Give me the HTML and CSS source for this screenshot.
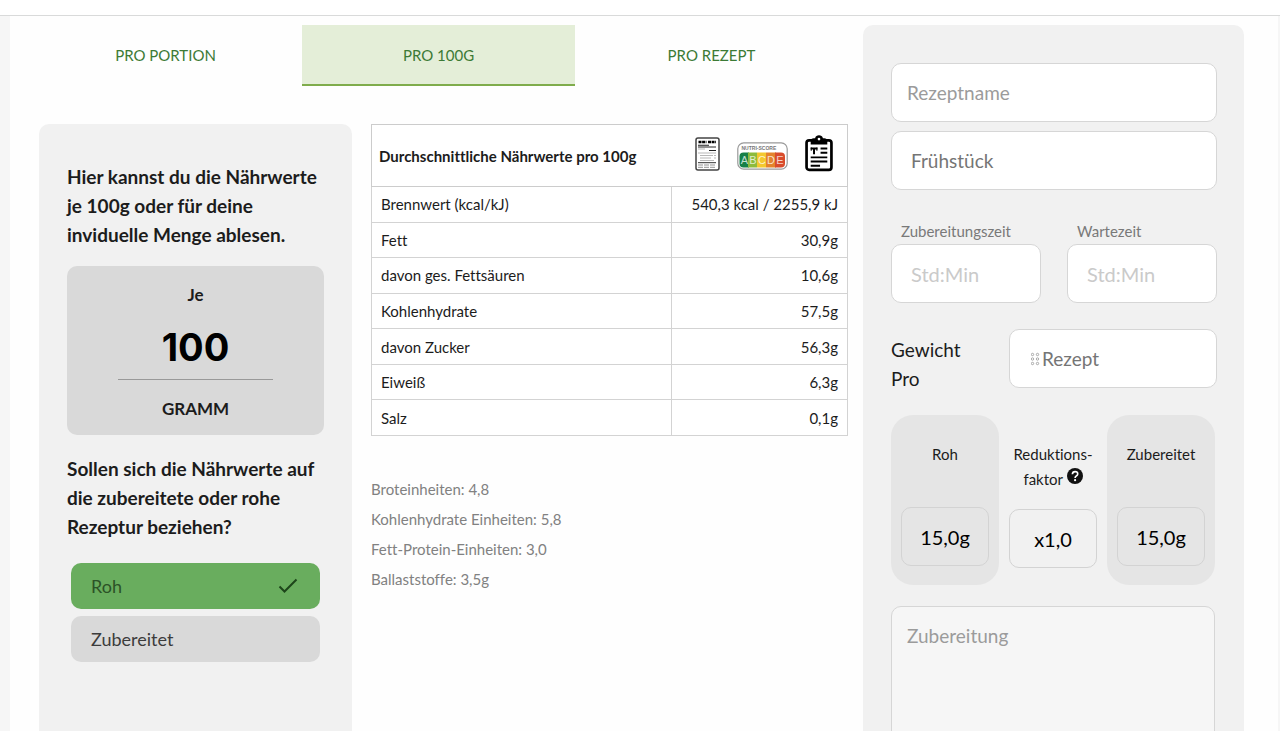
FILE: index.html
```html
<!DOCTYPE html>
<html lang="de">
<head>
<meta charset="utf-8">
<title>Nährwerte</title>
<link rel="stylesheet" href="styles.css">
</head>
<body>
<div class="page">
  <header class="topbar"></header>
  <main class="content">
    <section class="nutrition">
      <nav class="tabs">
        <button class="tab" type="button">PRO PORTION</button>
        <button class="tab tab-active" type="button">PRO 100G</button>
        <button class="tab" type="button">PRO REZEPT</button>
      </nav>
      <div class="columns">
        <aside class="card">
          <label class="heading" for="amount">Hier kannst du die Nährwerte je 100g oder für deine inviduelle Menge ablesen.</label>
          <div class="amount">
            <span>Je</span>
            <input id="amount" class="amount-input" type="text" value="100">
            <span>GRAMM</span>
          </div>
          <fieldset class="choices">
            <legend class="heading">Sollen sich die Nährwerte auf die zubereitete oder rohe Rezeptur beziehen?</legend>
            <label class="choice"><input class="choice-input" type="radio" name="state" checked><span>Roh</span>
              <svg class="check" viewBox="0 0 20 16" aria-hidden="true"><path d="M1.500 8.500 6.500 13.500 18.500 1.500" fill="none" stroke="currentColor" stroke-width="2"/></svg></label>
            <label class="choice"><input class="choice-input" type="radio" name="state"><span>Zubereitet</span></label>
          </fieldset>
        </aside>
        <div class="values">
          <table class="table">
            <colgroup><col class="col-name"><col></colgroup>
            <thead>
              <tr><th colspan="2"><div class="table-head">
                <span>Durchschnittliche Nährwerte pro 100g</span>
                <span class="icons">
                  <svg width="25" height="34" viewBox="0 0 25 34" aria-hidden="true">
                    <rect x="1" y="1" width="23" height="32" rx="2" fill="#fff" stroke="#444" stroke-width="1.500"/>
                    <path d="M3.500 5h8M13 5h8" stroke="#000" stroke-width="2.400" stroke-dasharray="3 .6"/>
                    <path d="M3 8.200h11M3 10h18M14 13.500h7" stroke="#222" stroke-width="1.100"/>
                    <path d="M3 12h7M3 16h18M5 18.500h13M5 21h11M5 23.500h14M19 18.500h2M19 21h2" stroke="#999" stroke-width=".7"/>
                    <path d="M3 25.700h18" stroke="#333" stroke-width="1"/>
                    <path d="M3 28h18M3 30.300h18" stroke="#777" stroke-width=".8" stroke-dasharray="5 1"/>
                  </svg>
                  <svg class="score" width="51" height="28" viewBox="0 0 51 28" aria-hidden="true">
                    <defs><clipPath id="scale"><rect x="2.500" y="10.500" width="45.500" height="15" rx="4"/></clipPath></defs>
                    <rect x=".8" y=".8" width="49.400" height="26.400" rx="6" fill="#fff" stroke="#999" stroke-width="1.200"/>
                    <text x="4.500" y="7.600" class="score-title">NUTRI-SCORE</text>
                    <g clip-path="url(#scale)">
                      <path fill="#178048" d="M2 10h10v17H2z"/><path fill="#8dbb3c" d="M11 10h9v17h-9z"/><path fill="#f4c82f" d="M20 10h9v17h-9z"/><path fill="#e4832c" d="M29 10h10v17H29z"/><path fill="#d84b2c" d="M38 10h11v17H38z"/>
                    </g>
                    <g class="score-letter"><text x="7.500" y="22">A</text><text x="16" y="22">B</text><text x="25" y="22">C</text><text x="34" y="22">D</text><text x="43" y="22">E</text></g>
                  </svg>
                  <svg width="28" height="37" viewBox="0.5 1.5 27 34.5" aria-hidden="true">
                    <rect x="2" y="6" width="24" height="28.500" rx="2.500" fill="#fff" stroke="#000" stroke-width="2.600"/>
                    <path d="M6 10V6.500Q6 4 9 4h1.200a4 4 0 0 1 7.600 0H19q3 0 3 2.500V10z" fill="#000"/>
                    <circle cx="14" cy="4.800" r="1.300" fill="#fff"/>
                    <path d="M6 14h6.500M9.200 13v6.500M15.500 14h6.500M15.500 18h6.500M6 22.500h16M6 26.500h16M6 30.500h9" stroke="#000" stroke-width="1.900"/>
                    <path d="M6.500 13v3M12 13v3" stroke="#000" stroke-width="1"/>
                  </svg>
                </span>
              </div></th></tr>
            </thead>
            <tbody>
              <tr><td>Brennwert (kcal/kJ)</td><td>540,3 kcal / 2255,9 kJ</td></tr>
              <tr><td>Fett</td><td>30,9g</td></tr>
              <tr><td>davon ges. Fettsäuren</td><td>10,6g</td></tr>
              <tr><td>Kohlenhydrate</td><td>57,5g</td></tr>
              <tr><td>davon Zucker</td><td>56,3g</td></tr>
              <tr><td>Eiweiß</td><td>6,3g</td></tr>
              <tr><td>Salz</td><td>0,1g</td></tr>
            </tbody>
          </table>
          <ul class="units">
            <li>Broteinheiten: 4,8</li>
            <li>Kohlenhydrate Einheiten: 5,8</li>
            <li>Fett-Protein-Einheiten: 3,0</li>
            <li>Ballaststoffe: 3,5g</li>
          </ul>
        </div>
      </div>
    </section>
    <form class="recipe">
      <input class="field field-name" type="text" placeholder="Rezeptname" aria-label="Rezeptname">
      <select class="field" aria-label="Kategorie"><option>Frühstück</option></select>
      <div class="times">
        <div class="time"><label class="time-label" for="prep">Zubereitungszeit</label><input id="prep" class="field field-time" type="text" placeholder="Std:Min"></div>
        <div class="time"><label class="time-label" for="wait">Wartezeit</label><input id="wait" class="field field-time" type="text" placeholder="Std:Min"></div>
      </div>
      <div class="weight">
        <label class="weight-label" for="per">Gewicht Pro</label>
        <div class="field per">
          <svg width="9" height="14" viewBox="0 0 9 14" aria-hidden="true"><g fill="none" stroke="#8a8a8a" stroke-width=".7"><circle cx="1.500" cy="2.500" r="1.200"/><circle cx="6.500" cy="2.500" r="1.200"/><circle cx="1.500" cy="7" r="1.200"/><circle cx="6.500" cy="7" r="1.200"/><circle cx="1.500" cy="11.500" r="1.200"/><circle cx="6.500" cy="11.500" r="1.200"/></g></svg>
          <select id="per" class="per-select"><option>Rezept</option></select>
        </div>
      </div>
      <div class="factors">
        <div class="factor factor-shaded"><label class="factor-label" for="raw">Roh</label><input id="raw" class="field factor-input" type="text" value="15,0g"></div>
        <div class="factor"><label class="factor-label" for="factor">Reduktions-<br>faktor <svg class="help" viewBox="0 0 16 16" aria-hidden="true"><circle cx="8" cy="8" r="8" fill="#111"/><path d="M5.400 6.200Q5.500 3.600 8.100 3.600T10.700 5.900Q10.700 7.200 9.300 8 8.100 8.700 8.100 9.900" fill="none" stroke="#fff" stroke-width="1.700"/><circle cx="8.100" cy="12.200" r="1.100" fill="#fff"/></svg></label><input id="factor" class="field factor-input" type="text" value="x1,0"></div>
        <div class="factor factor-shaded"><label class="factor-label" for="cooked">Zubereitet</label><input id="cooked" class="field factor-input" type="text" value="15,0g"></div>
      </div>
      <textarea class="field notes" placeholder="Zubereitung" aria-label="Zubereitung"></textarea>
    </form>
  </main>
</div>
</body>
</html>
```
FILE: styles.css
```css
* { box-sizing: border-box; }
body { margin: 0; background: #f6f6f6; color: #1c1c1c; font-family: Lato, sans-serif; font-size: 15px; font-variant-ligatures: none; }
input, select, textarea, button { font: inherit; font-variant-ligatures: none; color: inherit; }
.page { display: flex; flex-direction: column; height: 100vh; overflow: hidden; }
.topbar { flex: none; height: 16px; background: #fff; border-bottom: 1px solid #d9dada; }
.content { flex: 1; min-height: 0; display: grid; grid-template-columns: minmax(0, 819fr) minmax(0, 381fr); gap: 15px; margin: 0 2px 0 10px; padding: 9px 34px 0 19px; background: #fefefe; }

.nutrition { display: flex; flex-direction: column; }
.tabs { display: grid; grid-template-columns: repeat(3, 1fr); }
.tab { height: 61px; padding: 0; border: 0; border-bottom: 2px solid transparent; background: none; color: #3c7a35; }
.tab-active { background: #e4eed8; border-bottom-color: #7fac4c; }
.columns { flex: 1; display: grid; grid-template-columns: minmax(0, 313fr) minmax(0, 477fr); gap: 19px; margin-top: 38px; padding-left: 10px; }

.card { padding: 38px 28px 0; border-radius: 10px 10px 0 0; background: #f1f1f1; }
.heading { display: block; padding: 0; font-size: 19px; font-weight: 700; line-height: 29px; }
.amount { display: flex; flex-direction: column; align-items: center; margin: 17px 0 19px; padding: 16px 0 14px; border-radius: 10px; background: #d9d9d9; font-size: 17px; font-weight: 700; line-height: 25px; }
.amount-input { width: 60%; height: 60px; margin: 13px 0 16px; padding: 0 0 6px; border: 0; border-bottom: 1px solid #999; background: none; color: #000; font: 700 38px Inter, sans-serif; text-align: center; }
.choices { margin: 0; padding: 0; border: 0; }
.choice { position: relative; display: flex; align-items: center; justify-content: space-between; height: 46px; margin: 0 4px 7px; padding: 0 22px 0 20px; border-radius: 10px; background: #d9d9d9; color: #3c3c3c; font-size: 18px; }
.heading + .choice { margin-top: 22px; }
.choice:has(:checked) { background: #69ad5e; color: #2c5227; }
.choice-input { position: absolute; opacity: 0; }
.check { width: 20px; height: 16px; color: #1d451a; }

.table { width: 100%; height: 312px; border-collapse: collapse; table-layout: fixed; background: #fff; }
.col-name { width: 63%; }
.table th { height: 62px; padding: 0 14px 0 7px; border: 1px solid #ccc; text-align: left; }
.table-head, .icons { display: flex; align-items: center; justify-content: space-between; }
.icons { gap: 17px; padding-bottom: 4px; }
.score { margin-top: 4px; }
.table td { padding: 0 9px; border: 1px solid #d3d3d3; line-height: 24px; }
.table td + td { text-align: right; }
.score-title { font: 700 5px "Liberation Sans", sans-serif; fill: #777; }
.score-letter { font: 11px "Liberation Sans", sans-serif; fill: #fff; fill-opacity: .75; text-anchor: middle; }
.units { margin: 38px 0 0; padding: 0; list-style: none; color: #818181; line-height: 30px; }

.recipe { display: flex; flex-direction: column; padding: 38px 27px 0 28px; border-radius: 10px 10px 0 0; background: #f1f1f1; }
.field { flex: none; width: 100%; height: 59px; margin: 0; padding: 0 19px; border: 1px solid #d6d6d6; border-radius: 10px; background: #fff; color: #757575; font-size: 19px; appearance: none; }
.field::placeholder { color: #9b9b9b; opacity: 1; }
.field-name { margin-bottom: 9px; padding-left: 15px; }
.times { display: grid; grid-template-columns: 1fr 1fr; gap: 26px; margin-top: 28px; }
.time-label { display: block; padding-left: 10px; font-size: 15px; line-height: 26px; color: #797979; }
.field-time { font-size: 20px; }
.field-time::placeholder { color: #cacaca; }
.weight { display: grid; grid-template-columns: minmax(0, 90fr) minmax(0, 208fr); gap: 28px; margin: 26px 0 22px; }
.weight-label { padding-top: 6px; font-size: 19px; line-height: 29px; }
.per { display: flex; align-items: center; gap: 2px; padding-left: 21px; }
.per-select { flex: 1; min-width: 0; padding: 0; border: 0; background: none; appearance: none; }
.factors { display: grid; grid-template-columns: repeat(3, 1fr); margin-right: 2px; }
.factor { display: flex; flex-direction: column; justify-content: space-between; height: 170px; padding: 27px 10px 17px; }
.factor-shaded { padding-bottom: 19px; border-radius: 22px; background: #e5e5e5; }
.factor-label { font-size: 15px; line-height: 25px; text-align: center; white-space: nowrap; }
.help { width: 16px; height: 16px; vertical-align: 1px; }
.factor-input { padding-inline: 0; background: transparent; border-color: #d3d3d3; color: #000; font-size: 20px; text-align: center; }
.notes { flex: 1; width: auto; min-height: 180px; margin: 21px 2px 0 0; padding: 17px 15px; background: #f6f6f6; resize: none; }
```
